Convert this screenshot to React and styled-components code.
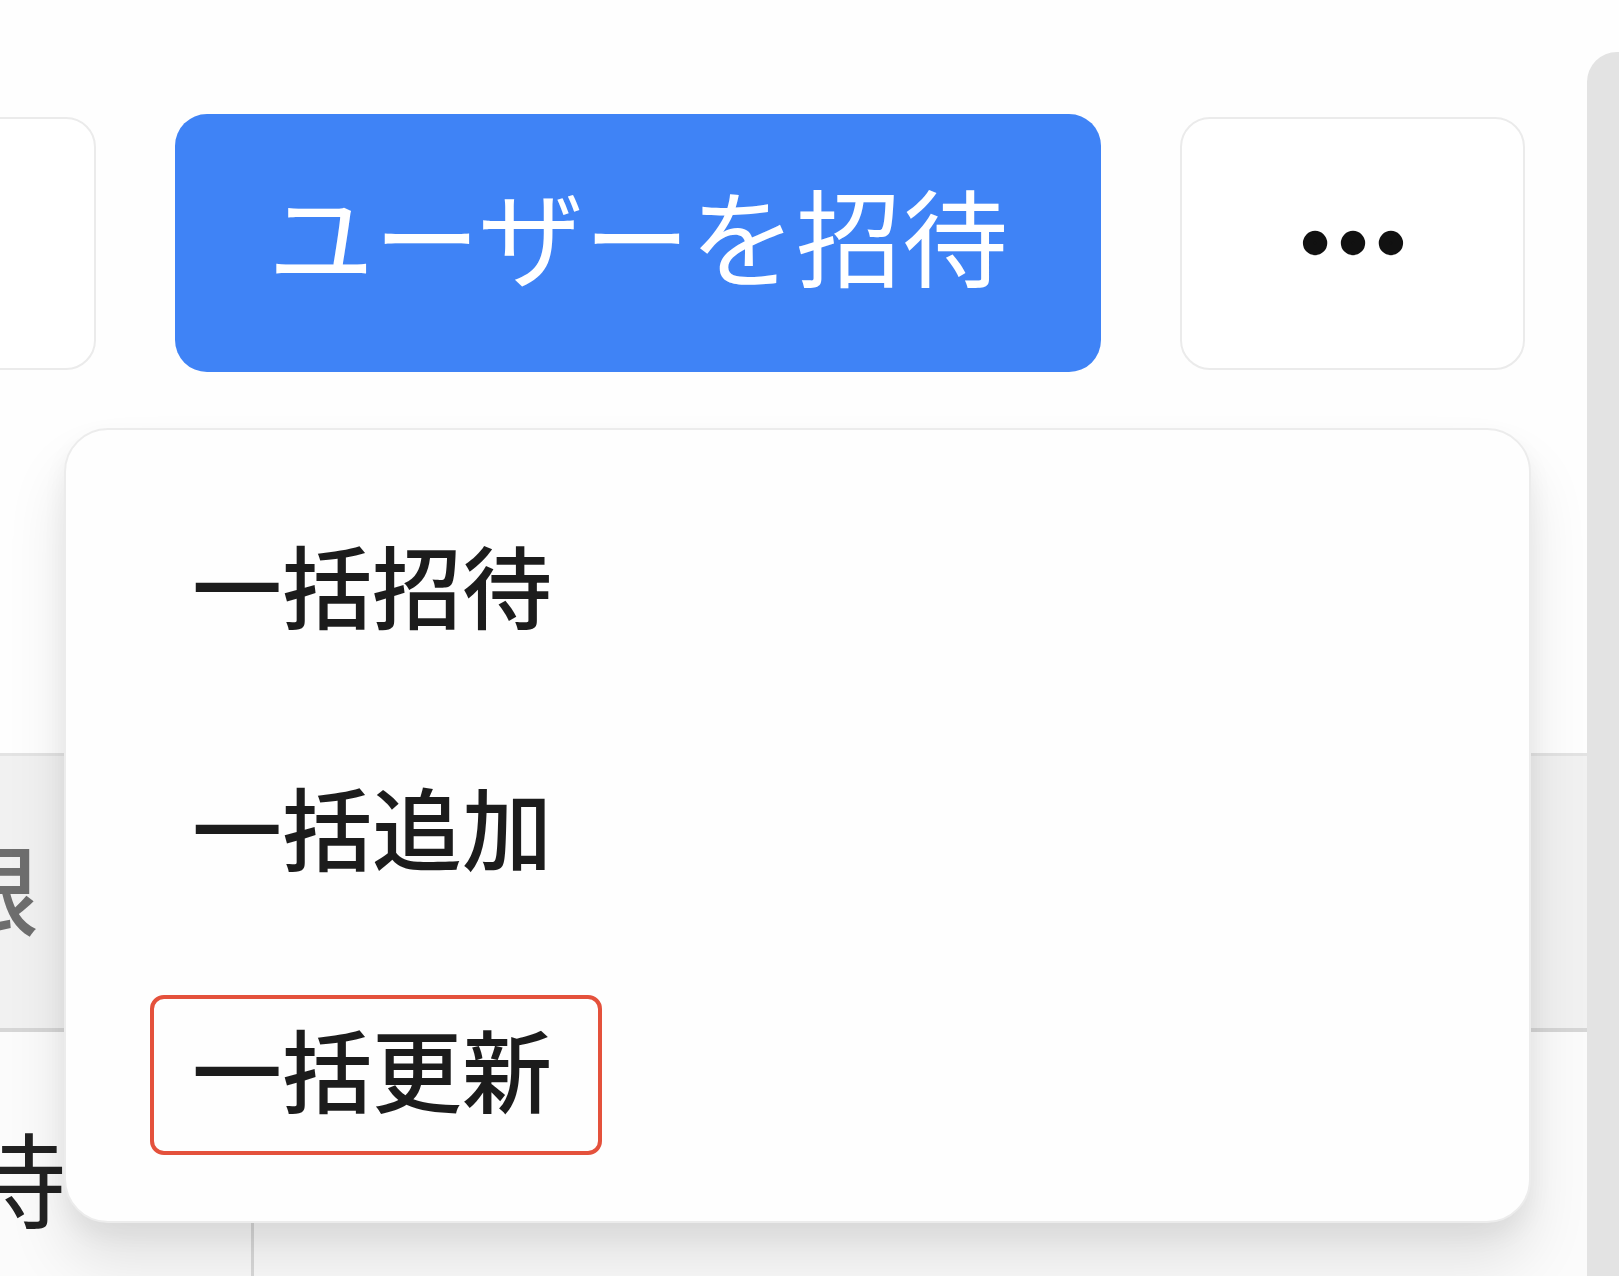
import React from "react";
import styled, { createGlobalStyle } from "styled-components";
import { Ellipsis } from "lucide-react";

const GlobalStyle = createGlobalStyle`
  html, body {
    margin: 0;
    padding: 0;
    background: #fefefe;
    overflow: hidden;
  }
  body {
    font-family: "Noto Sans CJK JP", "Noto Sans", sans-serif;
  }
`;

const Page = styled.div`
  display: flex;
  width: 1619px;
  height: 1276px;
  overflow: hidden;
`;

const Main = styled.main`
  flex: 1;
  min-width: 0;
  display: flex;
  flex-direction: column;
`;

const ScrollTrack = styled.aside`
  width: 32px;
  flex-shrink: 0;
  margin-top: 52px;
  background: #e3e3e3;
  border-top-left-radius: 30px;
`;

const Toolbar = styled.header`
  display: flex;
  justify-content: flex-end;
  align-items: center;
  gap: 79px;
  padding: 114px 62px 0 0;
  position: relative;
  z-index: 5;
`;

const GhostButton = styled.button`
  flex-shrink: 0;
  width: ${(p) => p.$width}px;
  height: 253px;
  border: 2px solid #ebebeb;
  border-radius: 30px;
  background: #fff;
  display: flex;
  align-items: center;
  justify-content: center;
  padding: 0;
  color: #111;
`;

const PrimaryButton = styled.button`
  flex-shrink: 0;
  width: 926px;
  height: 258px;
  border: none;
  border-radius: 32px;
  background: #3f83f6;
  color: #fff;
  font-family: "Noto Sans CJK JP", sans-serif;
  font-size: 106px;
  font-weight: 400;
  line-height: 1;
  padding: 0 0 20px;
`;

const MenuAnchor = styled.div`
  position: relative;
  flex-shrink: 0;
`;

const Dropdown = styled.ul`
  position: absolute;
  top: calc(100% + 58px);
  right: -6px;
  width: 1467px;
  height: 795px;
  box-sizing: border-box;
  margin: 0;
  padding: 40px 0 27px;
  list-style: none;
  background: #fefefe;
  border: 2px solid #ececec;
  border-radius: 44px;
  box-shadow: 0 40px 60px rgba(0, 0, 0, 0.1), 0 12px 24px rgba(0, 0, 0, 0.05);
`;

const MenuItem = styled.li`
  height: 242px;
  display: flex;
  align-items: center;
  padding-left: 84px;
`;

const MenuLabel = styled.span`
  display: inline-block;
  padding: 22px 46px 38px 38px;
  border: 4px solid ${(p) => (p.$marked ? "#e4513c" : "transparent")};
  border-radius: 14px;
  font-size: 90px;
  line-height: 92px;
  color: #1c1c1c;
  font-weight: 500;
`;

const Table = styled.section`
  margin-top: 381px;
  margin-left: -300px;
  display: grid;
  grid-template-columns: 554px 1fr;
  grid-template-rows: 279px 1fr;
  flex: 1;
`;

const HeadCell = styled.div`
  background: #f1f1f1;
  border-top: 3px solid #e3e3e3;
  border-bottom: 4px solid #d6d6d6;
  display: flex;
  align-items: center;
  padding: 0 0 14px 143px;
  font-size: 98px;
  font-weight: 500;
  color: #6e6e6e;
  white-space: nowrap;
`;

const BodyCell = styled.div`
  background: #fbfbfb;
  border-right: ${(p) => (p.$divider ? "3px solid #dadada" : "none")};
  padding: 92px 0 0 158px;
  font-size: 104px;
  line-height: 1;
  color: #222;
  white-space: nowrap;
`;

const menu = [
  { label: "一括招待" },
  { label: "一括追加" },
  { label: "一括更新", marked: true },
];

export default function App() {
  return (
    <>
      <GlobalStyle />
      <Page>
        <Main>
          <Toolbar>
            <GhostButton $width={420} />
            <PrimaryButton>ユーザーを招待</PrimaryButton>
            <MenuAnchor>
              <GhostButton $width={345}>
                <Ellipsis size={130} strokeWidth={2.5} color="#111" fill="#111" />
              </GhostButton>
              <Dropdown>
                {menu.map((m) => (
                  <MenuItem key={m.label}>
                    <MenuLabel $marked={m.marked}>{m.label}</MenuLabel>
                  </MenuItem>
                ))}
              </Dropdown>
            </MenuAnchor>
          </Toolbar>
          <Table>
            <HeadCell>権限</HeadCell>
            <HeadCell />
            <BodyCell $divider>招待</BodyCell>
            <BodyCell />
          </Table>
        </Main>
        <ScrollTrack />
      </Page>
    </>
  );
}
